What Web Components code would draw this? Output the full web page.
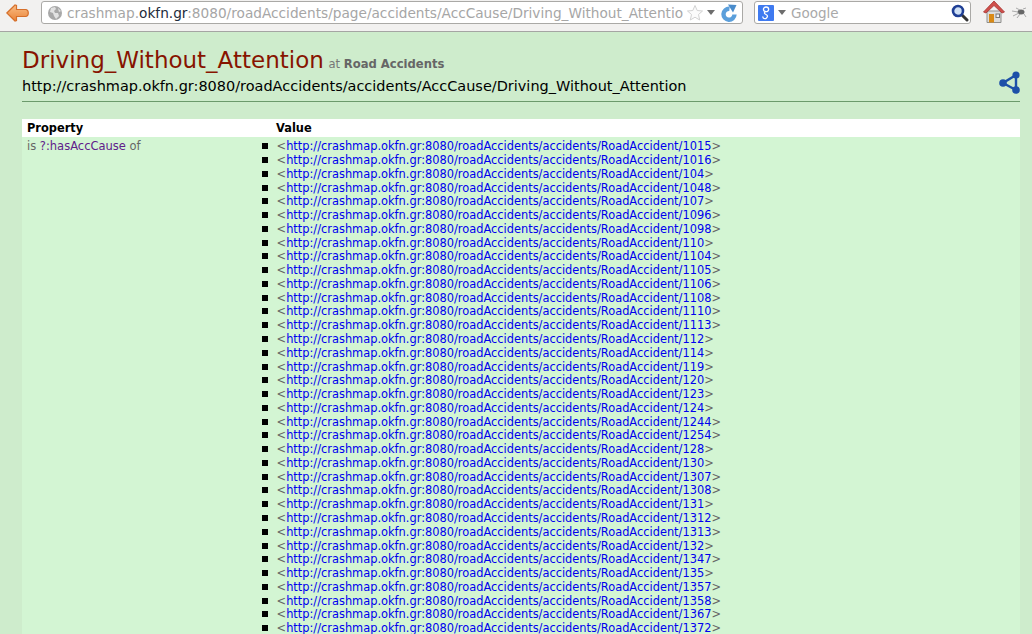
<!DOCTYPE html>
<html>
<head>
<meta charset="utf-8">
<style>
html, body { margin: 0; height: 634px; overflow: hidden; background: #ceeccc; }
body { display: flex; flex-direction: column; font-family: "DejaVu Sans", sans-serif; }
</style>
</head>
<body>
<browser-bar url="crashmap.okfn.gr:8080/roadAccidents/page/accidents/AccCause/Driving_Without_Attentio"></browser-bar>
<page-header title="Driving_Without_Attention" site="Road Accidents" uri="http://crashmap.okfn.gr:8080/roadAccidents/accidents/AccCause/Driving_Without_Attention"></page-header>
<property-table></property-table>

<script>
class browserBar extends HTMLElement {

    constructor() {
        super();
        this.shadow = this.attachShadow({ mode: 'open' });
    }

    connectedCallback() {
        this.render();
    }

    render() {
        let url = this.getAttribute('url');
        let host = 'crashmap.';
        let domain = 'okfn.gr';
        let rest = url.substring((host + domain).length);

        this.shadow.innerHTML =
        `
        <style>
        :host {
            display: flex;
            align-items: flex-start;
            height: 31px;
            flex: none;
            background: #f2f1f0;
            border-bottom: 1px solid #a5a5a3;
            font-family: "DejaVu Sans", sans-serif;
            overflow: hidden;
        }
        .back { width: 23px; height: 18px; margin: 4px 0 0 6px; flex: none; }
        .field {
            box-sizing: border-box;
            height: 23px;
            margin-top: 1px;
            background: #fff;
            border: 1px solid #aaa9a6;
            border-radius: 3px;
            display: flex;
            align-items: center;
            flex: none;
        }
        .url { width: 702px; margin-left: 12px; padding-left: 6px; }
        .url .text {
            width: 617px;
            margin-left: 5px;
            font-size: 13.680px;
            color: #a6a6a6;
            white-space: nowrap;
        }
        .url b { font-weight: normal; color: #222b3a; }
        .search { width: 217px; margin-left: 11px; padding-left: 3px; }
        .search .text { margin-left: 5px; font-size: 13.500px; color: #a9a9a9; flex: 1; }
        .arrow { width: 0; height: 0; border: 4px solid transparent; border-top: 5px solid #6d6d6d; border-bottom: none; flex: none; }
        .home { width: 22px; height: 24px; margin: 0 0 0 12px; flex: none; }
        .bug { width: 15px; height: 12px; margin: 7px 0 0 7px; flex: none; }
        </style>

        <svg class="back" viewBox="0 0 23 18">
            <defs>
                <linearGradient id="orange" x1="0" y1="0" x2="0" y2="1">
                    <stop offset="0" stop-color="#f9bd85"/>
                    <stop offset="1" stop-color="#ea8438"/>
                </linearGradient>
            </defs>
            <path d="M.800 9 L9 1 L10.500 1.500 L10.500 5.500 L20 5.500 Q22.300 6 22.300 9 Q22.300 12 20 12.500 L10.500 12.500 L10.500 16.500 L9 17 Z" fill="url(#orange)" stroke="#d66f2a" stroke-width="1.200"/>
        </svg>

        <div class="field url">
            <svg width="14" height="14" viewBox="0 0 14 14" style="flex:none">
                <circle cx="7" cy="7" r="7" fill="#a8a8a8"/>
                <path d="M3 2 L7 1 L8 3 L6 5 L7 7 L10 7 L11 10 L8 13 L6 10 L5 7 L2 6 Z M10 2 L13 5 L11 6 Z" fill="#e2e2e2"/>
            </svg>
            <div class="text">${host}<b>${domain}</b>${rest}</div>
            <svg width="18" height="18" viewBox="0 0 18 18" style="flex:none;margin-left:2px">
                <path d="M9 1.500 L11.200 6.500 L16.500 7 L12.500 10.500 L13.700 16 L9 13.200 L4.300 16 L5.500 10.500 L1.500 7 L6.800 6.500 Z" fill="#fbfbfb" stroke="#d2d2d2"/>
            </svg>
            <span class="arrow" style="margin-left:3px"></span>
            <svg width="16" height="18" viewBox="0 0 16 18" style="flex:none;margin-left:6px">
                <path d="M13.500 10.500 A5.500 5.500 0 1 1 8.500 4.800" fill="none" stroke="#5b9fdb" stroke-width="4.400"/>
                <path d="M7 .500 L15.500 1 L12 8.500 Z" fill="#4a8ccb"/>
            </svg>
        </div>

        <div class="field search">
            <svg width="16" height="16" viewBox="0 0 16 16" style="flex:none">
                <rect width="16" height="16" rx="1" fill="#3f7af0"/>
                <path d="M8 2 A2.500 2.200 0 1 0 8.100 6.600 A2.500 2.200 0 1 0 8 2 M7 7 Q5.500 8.500 8 9.500 Q11 11 8 13.500 Q4.500 14 5 11.500" fill="none" stroke="#fff" stroke-width="1.300"/>
            </svg>
            <span class="arrow" style="margin-left:4px"></span>
            <div class="text">Google</div>
            <svg width="18" height="18" viewBox="0 0 18 18" style="flex:none;margin-right:1px">
                <path d="M11 11 L16 16" stroke="#333" stroke-width="3" stroke-linecap="round"/>
                <circle cx="7" cy="7" r="5" fill="#cfe0f5" stroke="#1f3f95" stroke-width="2.600"/>
            </svg>
        </div>

        <svg class="home" viewBox="0 0 22 24">
            <path d="M4 11 H18 V22.500 H4 Z" fill="#dcdcda" stroke="#8f8f8d"/>
            <rect x="6" y="14" width="5" height="8.500" fill="#d98a14"/>
            <rect x="13" y="14" width="3.500" height="3.500" fill="#eee" stroke="#777"/>
            <path d="M.500 12 L11 1 L21.500 12 L19 13 L11 5.500 L3 13 Z" fill="#cf4f4a" stroke="#a73532" stroke-width=".8"/>
        </svg>
        <svg class="bug" viewBox="0 0 15 12">
            <ellipse cx="9" cy="5" rx="3.500" ry="2.500" fill="#666"/>
            <path d="M0 4 L6 5 M1 9 L7 6 M4 1 L8 3 M5 11 L8 7 M11 2 L14 1 M12 7 L14 10" stroke="#aaa" stroke-width="1"/>
        </svg>
        `;
    }

}

customElements.define('browser-bar', browserBar);

class pageHeader extends HTMLElement {

    constructor() {
        super();
        this.shadow = this.attachShadow({ mode: 'open' });
    }

    connectedCallback() {
        this.render();
    }

    render() {
        this.shadow.innerHTML =
        `
        <style>
        :host {
            display: block;
            flex: none;
            margin: 0 12px 0 22px;
            padding-top: 14px;
            height: 55px;
            border-bottom: 1px solid #6c9a6c;
            font-family: "DejaVu Sans", sans-serif;
        }
        .title { height: 28px; line-height: 28px; white-space: nowrap; color: #777; font-size: 11.600px; }
        .title span { font-size: 23px; color: #871400; margin-right: 1px; }
        .title b { color: #666; }
        .uri {
            display: flex;
            justify-content: space-between;
            align-items: center;
            height: 24px;
            font-size: 14.480px;
            color: #000;
        }
        svg { flex: none; margin-bottom: 8px; }
        </style>

        <div class="title"><span>${this.getAttribute('title')}</span> at <b>${this.getAttribute('site')}</b></div>
        <div class="uri">
            <span>${this.getAttribute('uri')}</span>
            <svg width="21" height="23" viewBox="0 0 21 23">
                <path d="M17 4 L4 12 L17 19 Z" fill="none" stroke="#1d50a8" stroke-width="2.400"/>
                <circle cx="17" cy="4" r="3.600" fill="#1d50a8"/>
                <circle cx="4" cy="12" r="3.800" fill="#1d50a8"/>
                <circle cx="17" cy="19" r="3.800" fill="#1d50a8"/>
            </svg>
        </div>
        `;
    }

}

customElements.define('page-header', pageHeader);

class propertyTable extends HTMLElement {

    constructor() {
        super();
        this.shadow = this.attachShadow({ mode: 'open' });
    }

    connectedCallback() {
        this.render();
    }

    render() {
        let base = 'http://crashmap.okfn.gr:8080/roadAccidents/accidents/RoadAccident/';
        let ids = [1015, 1016, 104, 1048, 107, 1096, 1098, 110, 1104, 1105, 1106, 1108, 1110, 1113, 112, 114, 119, 120, 123, 124,
            1244, 1254, 128, 130, 1307, 1308, 131, 1312, 1313, 132, 1347, 135, 1357, 1358, 1367, 1372];
        let rows = ids.map(id => `<li>&lt;<a>${base}${id}</a>&gt;</li>`).join('');

        this.shadow.innerHTML =
        `
        <style>
        :host {
            display: block;
            flex: none;
            margin: 17px 12px 0 22px;
            font-family: "DejaVu Sans", sans-serif;
            font-size: 11.400px;
        }
        .head {
            display: grid;
            grid-template-columns: 249px 1fr;
            height: 18px;
            line-height: 18px;
            background: #fff;
            font-weight: bold;
            color: #000;
            padding-left: 5px;
        }
        .body {
            display: grid;
            grid-template-columns: 249px 1fr;
            background: #d3f5d3;
            padding-left: 5px;
            color: #666;
            line-height: 13.770px;
            padding-top: 3.300px;
        }
        .name { font-size: 11.500px; }
        .name a { color: #60208a; }
        ul { margin: 0; padding: 0 0 0 .6px; list-style: none; }
        li { position: relative; white-space: nowrap; }
        li::before {
            content: "";
            position: absolute;
            left: -14.600px;
            top: 3px;
            width: 6px;
            height: 6px;
            background: #000;
        }
        li a { color: #0000ee; }
        </style>

        <div class="head"><span>Property</span><span>Value</span></div>
        <div class="body">
            <div class="name">is <a>?:hasAccCause</a> of</div>
            <ul>${rows}</ul>
        </div>
        `;
    }

}

customElements.define('property-table', propertyTable);
</script>
</body>
</html>
